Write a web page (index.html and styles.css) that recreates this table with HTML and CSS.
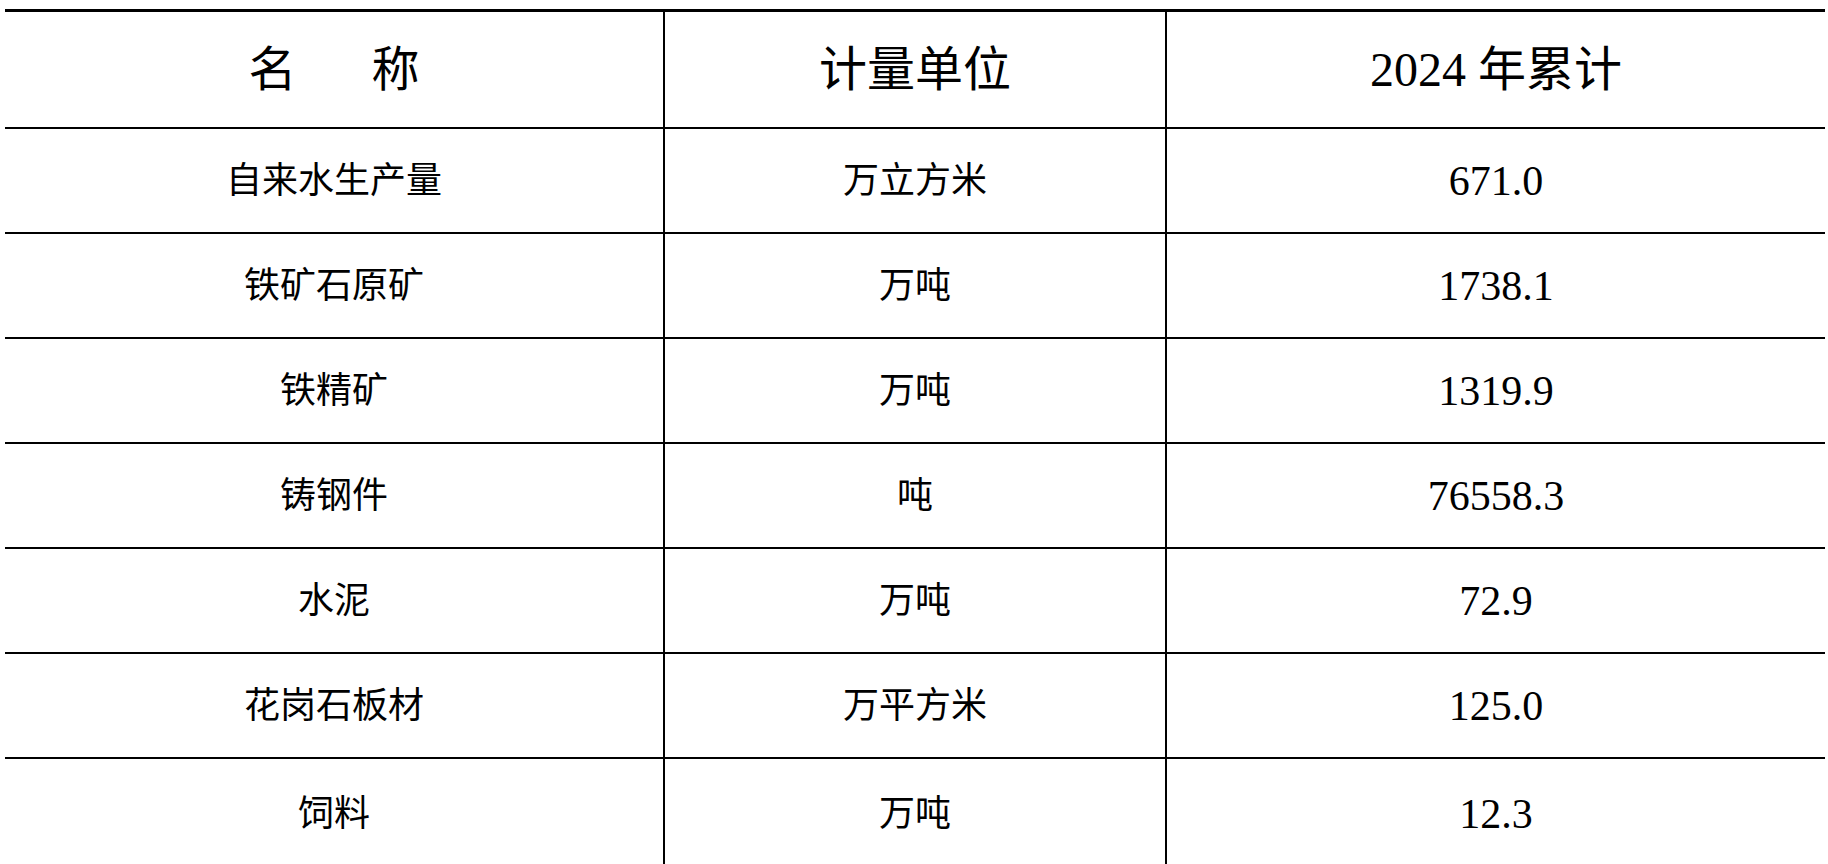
FILE: index.html
```html
<!DOCTYPE html>
<html>
<head>
<meta charset="utf-8">
<title>2024年累计</title>
<link rel="stylesheet" href="styles.css">
</head>
<body>
<div class="sheet">
  <div class="row head">
    <div class="cell"><span class="spread">名</span>称</div>
    <div class="cell">计量单位</div>
    <div class="cell"><span><span class="latin">2024</span> 年累计</span></div>
  </div>
  <div class="row">
    <div class="cell">自来水生产量</div>
    <div class="cell">万立方米</div>
    <div class="cell num">671.0</div>
  </div>
  <div class="row">
    <div class="cell">铁矿石原矿</div>
    <div class="cell">万吨</div>
    <div class="cell num">1738.1</div>
  </div>
  <div class="row">
    <div class="cell">铁精矿</div>
    <div class="cell">万吨</div>
    <div class="cell num">1319.9</div>
  </div>
  <div class="row">
    <div class="cell">铸钢件</div>
    <div class="cell">吨</div>
    <div class="cell num">76558.3</div>
  </div>
  <div class="row">
    <div class="cell">水泥</div>
    <div class="cell">万吨</div>
    <div class="cell num">72.9</div>
  </div>
  <div class="row">
    <div class="cell">花岗石板材</div>
    <div class="cell">万平方米</div>
    <div class="cell num">125.0</div>
  </div>
  <div class="row last">
    <div class="cell">饲料</div>
    <div class="cell">万吨</div>
    <div class="cell num">12.3</div>
  </div>
</div>
</body>
</html>
```
FILE: styles.css
```css
html, body {
  margin: 0;
  padding: 0;
  background: #fff;
  overflow: hidden;
}

body {
  font-family: "Liberation Serif", "Times New Roman", "Noto Sans CJK SC", serif;
  color: #000;
}

.sheet {
  margin: 9px 0 0 5px;
  width: 1820px;
}

.row {
  display: grid;
  grid-template-columns: 658px 502px 660px;
  height: 105px;
  box-sizing: border-box;
  border-bottom: 2px solid #000;
  font-size: 36px;
}

.row.head {
  height: 120px;
  border-top: 3px solid #000;
  font-size: 48px;
}

.row.last {
  border-bottom: none;
  height: 110px;
}

.cell {
  display: flex;
  align-items: center;
  justify-content: center;
  line-height: 1;
  white-space: nowrap;
}

.cell + .cell {
  border-left: 2px solid #000;
}

.cell.num,
.latin {
  font-family: "Liberation Serif", "Times New Roman", serif;
}

.cell.num {
  font-size: 42px;
}

.spread {
  margin-right: 75px;
}
```
